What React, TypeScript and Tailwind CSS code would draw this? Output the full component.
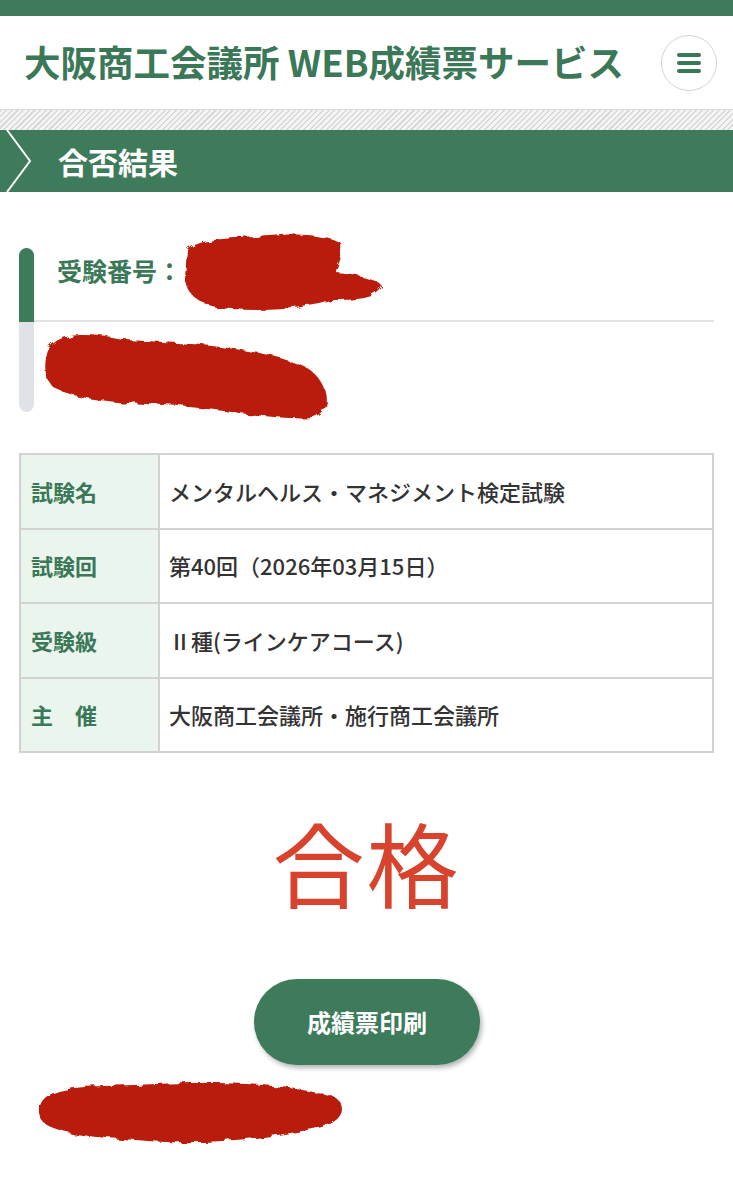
import React from 'react'

const FONT = '"Noto Sans CJK JP", "Noto Sans", sans-serif'

// hand-drawn looking redaction blob
function Scribble({ d, w, h, id }: { d: string; w: number; h: number; id: string }) {
  return (
    <svg width={w} height={h} viewBox={`0 0 ${w} ${h}`} className="block">
      <defs>
        <filter id={id} x="-10%" y="-10%" width="120%" height="120%">
          <feTurbulence type="fractalNoise" baseFrequency="0.09" numOctaves="2" seed="3" result="n" />
          <feDisplacementMap in="SourceGraphic" in2="n" scale="7" />
        </filter>
      </defs>
      <path d={d} fill="#b91e08" filter={`url(#${id})`} />
    </svg>
  )
}

const rows = [
  { label: '試験名', value: 'メンタルヘルス・マネジメント検定試験' },
  { label: '試験回', value: '第40回（2026年03月15日）' },
  { label: '受験級', value: 'Ⅱ種(ラインケアコース)' },
  { label: '主　催', value: '大阪商工会議所・施行商工会議所' },
]

export default function App() {
  return (
    <div className="min-h-[1200px] bg-white" style={{ fontFamily: FONT }}>
      {/* top bar */}
      <div className="h-4 bg-[#3d7b5a]" />

      {/* header */}
      <header className="flex h-[94px] items-center justify-between border-b border-[#dcdcdc] pl-6 pr-4">
        <h1 className="text-[36.5px] font-bold leading-none text-[#3a7857]">
          大阪商工会議所 WEB成績票サービス
        </h1>
        <button className="flex h-[56px] w-[56px] flex-col items-center justify-center gap-[4px] rounded-full border border-[#cdd8d2] bg-white">
          <span className="block h-[4px] w-[24px] rounded-full bg-[#3a7857]" />
          <span className="block h-[4px] w-[24px] rounded-full bg-[#3a7857]" />
          <span className="block h-[4px] w-[24px] rounded-full bg-[#3a7857]" />
        </button>
      </header>

      {/* striped band */}
      <div className="h-5 bg-[repeating-linear-gradient(135deg,#d9d9d9_0px,#d9d9d9_1.5px,#f4f4f4_1.5px,#f4f4f4_4px)]" />

      {/* section title */}
      <div className="relative flex h-[62px] items-center bg-[#3d7b5a] pl-[58px]">
        <svg className="absolute left-0 top-0" width="40" height="62" viewBox="0 0 40 62">
          <polyline points="7,0 30,31 7,62" fill="none" stroke="#ffffff" strokeWidth="2" />
        </svg>
        <h2 className="text-[30px] font-bold leading-none text-white">合否結果</h2>
      </div>

      {/* examinee block */}
      <div className="mt-[56px] flex px-[19px]">
        <div className="flex w-[15px] flex-col">
          <div className="h-[74px] rounded-t-full bg-[#3d7b5a]" />
          <div className="h-[90px] rounded-b-full bg-[#dfe3e8]" />
        </div>
        <div className="flex-1">
          <div className="relative h-[74px] border-b-2 border-[#e2e2e2] pl-[23px] pt-[3px]">
            <span className="text-[25px] font-bold leading-[38px] text-[#3a7857]">受験番号：</span>
            <div className="absolute left-[148px] top-[-16px]">
              <Scribble
                id="r1"
                w={204}
                h={84}
                d="M6,18 C18,4 60,7 100,3 C130,1 152,7 160,12 C162,26 154,34 154,40 C174,42 194,46 200,54 C197,67 172,68 152,68 C132,75 92,80 50,77 C18,75 5,64 4,47 Z"
              />
            </div>
          </div>
          <div className="relative h-[90px]">
            <div className="absolute left-[9px] top-[8px]">
              <Scribble
                id="r2"
                w={292}
                h={94}
                d="M4,24 C9,3 40,1 80,10 C150,13 222,18 264,38 C289,54 289,82 272,88 C230,91 180,78 120,75 C70,73 30,68 11,58 C1,47 1,36 4,24 Z"
              />
            </div>
          </div>
        </div>
      </div>

      {/* exam table */}
      <div className="mt-[41px] px-[19px]">
        <table className="w-full border-collapse border-2 border-[#d2d2d2]">
          <tbody>
            {rows.map((r) => (
              <tr key={r.label} className="h-[74.5px]">
                <td className="w-[139px] border-2 border-[#d2d2d2] bg-[#eaf5ed] pl-[10px] text-[22px] font-bold text-[#3a7857]">
                  {r.label}
                </td>
                <td className="border-2 border-[#d2d2d2] pl-[9px] text-[22px] font-medium text-[#333333]">
                  {r.value}
                </td>
              </tr>
            ))}
          </tbody>
        </table>
      </div>

      {/* result */}
      <div className="mt-[48px] flex justify-center">
        <p className="text-[92px] font-normal leading-[120px] tracking-[2px] text-[#d8432e]">合格</p>
      </div>

      {/* print button */}
      <div className="mt-[58px] flex justify-center">
        <button className="ml-[1px] flex h-[86px] w-[226px] items-center justify-center rounded-full bg-[#3d7b5a] text-[24px] font-bold text-white shadow-[2px_3px_5px_rgba(0,0,0,0.3)]">
          成績票印刷
        </button>
      </div>

      {/* footer (redacted) */}
      <div className="mt-[13px] pl-[36px]">
        <Scribble
          id="r3"
          w={312}
          h={70}
          d="M5,25 C15,6 60,9 120,6 C200,3 260,7 300,20 C312,30 306,45 282,50 C222,62 160,68 100,62 C60,60 20,55 8,45 C2,38 2,32 5,25 Z"
        />
      </div>
    </div>
  )
}
